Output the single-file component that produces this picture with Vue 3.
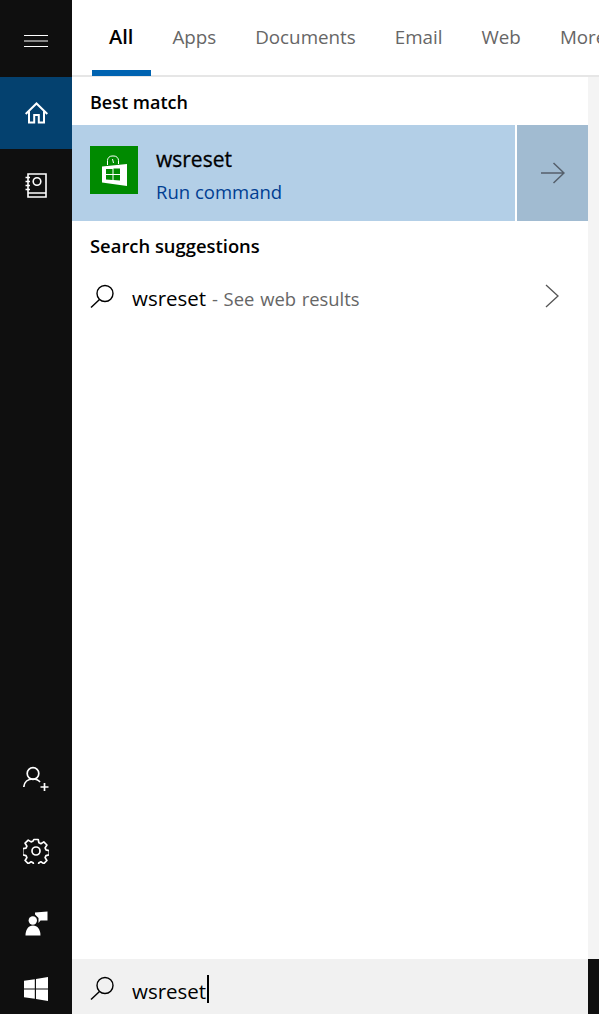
<script setup>
const tabs = ['All', 'Apps', 'Documents', 'Email', 'Web', 'More']
</script>

<template>
  <div class="cortana">
    <aside class="rail">
      <div class="rail-item menu">
        <svg width="24" height="12" viewBox="0 0 24 12"><path d="M0 .5h24M0 6h24M0 11.500h24" stroke="#fff" fill="none" /></svg>
      </div>
      <div class="rail-item active">
        <svg width="23" height="22" viewBox="0 0 23 22" fill="none" stroke="#fff" stroke-width="2"><path d="M.7 12 11.500 1.500 22.300 12M4 9.500V20.500h5.200v-7.500h4.600v7.500H19V9.500" /></svg>
      </div>
      <div class="rail-item">
        <svg width="22" height="25" viewBox="0 0 22 25" fill="none" stroke="#fff" stroke-width="1.600"><path d="M3 1h18v23H3zM3 20h18" /><circle cx="12" cy="8.500" r="3.800" /><path d="M.5 4.500h4.500M.5 8.500h4.500M.5 12.500h4.500M.5 16.500h4.500" /></svg>
      </div>
      <div class="spacer"></div>
      <div class="rail-item">
        <svg width="26" height="26" viewBox="0 0 26 26" fill="none" stroke="#fff" stroke-width="1.700"><circle cx="10" cy="7.500" r="5.800" /><path d="M.8 21c.4-5 4-8 9.200-8 3 0 5.500 1 7 3M17.500 21h8M21.500 17v8" /></svg>
      </div>
      <div class="rail-item">
        <svg width="26" height="26" viewBox="0 0 26 26" fill="none" stroke="#fff" stroke-width="1.700" stroke-linejoin="round"><circle cx="13" cy="13" r="4" /><path d="M10.800 1.500h4.400l.7 3.300 2 .9 2.900-1.800 3.100 3.100-1.800 2.900.9 2 3.300.7v4.200l-3.300.8-.9 2 1.800 2.900-3.100 3.100-2.900-1.800-2 .9-.7 3.300h-4.400l-.7-3.300-2-.9-2.900 1.800-3.100-3.100 1.800-2.900-.9-2-3.300-.8V10.800l3.300-.7.900-2-1.800-2.900 3.100-3.100 2.900 1.800 2-.9z" /></svg>
      </div>
      <div class="rail-item">
        <svg width="23" height="25" viewBox="0 0 23 25" fill="#fff"><circle cx="7.800" cy="9.500" r="4.200" /><path d="M.5 24.500c0-6 3-10 7.500-10s7.500 4 7.500 10z" /><path d="M10 1.500 22.500 .5v9h-7l-2 2.500V7l-3.500-3.500z" /></svg>
      </div>
      <div class="rail-item start">
        <svg width="24" height="24" viewBox="0 0 24 24" fill="#fff"><path d="M0 3.800 10.800 2.200v9.200H0zM12 2 24 0v11.400H12zM0 12.600h10.800v9.200L0 20.200zM12 12.600h12V24l-12-2z" /></svg>
      </div>
    </aside>

    <div class="main">
      <nav class="tabs">
        <span v-for="(t, i) in tabs" :key="t" class="tab" :class="{ on: i === 0 }">{{ t }}</span>
      </nav>

      <div class="middle">
        <section class="results">
          <h2 class="heading">Best match</h2>
          <div class="match">
            <div class="match-body">
              <div class="tile">
                <svg width="25" height="31" viewBox="0 0 25 31">
                  <path d="M5.500 10V5.500a4.500 4.500 0 0 1 4.500-4.500h2a4.500 4.500 0 0 1 4.500 4.500V9M10.500 4l1 4" fill="none" stroke="#fff" />
                  <path d="M0 11.500 25 9v22L0 27.500z" fill="#fff" />
                  <path d="M4 14h6.500v5H4zM11.500 13.500H18V19h-6.500zM4 20h6.500v5L4 24.500zM11.500 20H18v5.500l-6.500-.5z" fill="#008a00" />
                </svg>
              </div>
              <div>
                <div class="match-title">wsreset</div>
                <div class="match-sub">Run command</div>
              </div>
            </div>
            <div class="match-arrow">
              <svg width="24" height="22" viewBox="0 0 24 22" fill="none" stroke="#555f6b" stroke-width="1.500"><path d="M0 11h23M12.500 1l10.500 10-10.500 10" /></svg>
            </div>
          </div>

          <h2 class="heading wide">Search suggestions</h2>
          <div class="suggestion">
            <svg class="glass" width="25" height="25" viewBox="0 0 25 25" fill="none" stroke="#000" stroke-width="1.400"><circle cx="15" cy="9.500" r="8" /><path d="M9.500 15.500 1 23.500" /></svg>
            <span class="query">wsreset</span>
            <span class="hint">&nbsp;- See web results</span>
            <svg class="chevron" width="14" height="24" viewBox="0 0 14 24" fill="none" stroke="#555" stroke-width="1.300"><path d="M1 1l12 11L1 23" /></svg>
          </div>
        </section>
        <div class="scroll"></div>
      </div>

      <div class="footer">
        <div class="searchbox">
          <svg class="glass" width="25" height="25" viewBox="0 0 25 25" fill="none" stroke="#000" stroke-width="1.400"><circle cx="15" cy="9.500" r="8" /><path d="M9.500 15.500 1 23.500" /></svg>
          <span class="query">wsreset</span><span class="caret"></span>
        </div>
        <div class="corner"></div>
      </div>
    </div>
  </div>
</template>

<style>
html, body {
  margin: 0;
  background: #fff;
}
</style>

<style scoped>
.cortana {
  display: flex;
  width: 599px;
  height: 1014px;
  overflow: hidden;
  font-family: "Open Sans", "Noto Sans", sans-serif;
  color: #000;
}

.rail {
  flex: 0 0 72px;
  display: flex;
  flex-direction: column;
  background: #0f0f0f;
}
.rail-item {
  height: 72px;
  display: flex;
  align-items: center;
  justify-content: center;
}
.rail-item.menu {
  height: 77px;
  padding-top: 4px;
  box-sizing: border-box;
}
.rail-item.active {
  background: #04416f;
}
.rail-item.start {
  height: 55px;
  padding-top: 5px;
  box-sizing: border-box;
}
.spacer {
  flex: 1;
}

.main {
  flex: 1;
  display: flex;
  flex-direction: column;
  min-width: 0;
}

.tabs {
  flex: 0 0 77px;
  min-height: 0;
  box-sizing: border-box;
  display: flex;
  align-items: flex-start;
  gap: 39px;
  padding-left: 20px;
  border-bottom: 2px solid #e6e6e6;
  white-space: nowrap;
}
.tab {
  padding-top: 23px;
  font-size: 18.800px;
  line-height: 28px;
  color: #666;
}
.tab.on {
  box-sizing: border-box;
  height: 76px;
  padding: 23px 18px 0 17px;
  margin-right: -18px;
  color: #000;
  font-size: 20px;
  font-weight: 600;
  border-bottom: 6px solid #0063b1;
}

.middle {
  flex: 1;
  display: flex;
  min-height: 0;
}
.results {
  flex: 1;
  min-width: 0;
}
.scroll {
  flex: 0 0 11px;
  background: #f4f4f4;
}

.heading {
  margin: 0;
  padding: 13px 0 11px 18px;
  font-size: 18px;
  font-weight: 600;
  line-height: 24px;
}
.heading.wide {
  font-size: 18.400px;
}

.match {
  display: flex;
  height: 96px;
  gap: 2px;
}
.match-body {
  flex: 1;
  display: flex;
  align-items: flex-start;
  gap: 18px;
  padding: 19px 0 0 18px;
  background: #b3cfe7;
}
.tile {
  width: 48px;
  height: 48px;
  margin-top: 2px;
  background: #008a00;
  display: flex;
  align-items: center;
  justify-content: center;
}
.match-title {
  font-size: 21px;
  line-height: 30px;
  font-weight: 500;
  -webkit-text-stroke: 0.3px #000;
}
.match-sub {
  margin-top: 5px;
  font-size: 18.500px;
  line-height: 26px;
  color: #003e92;
}
.match-arrow {
  flex: 0 0 71px;
  display: flex;
  align-items: center;
  justify-content: center;
  background: #a1bbd1;
}

.suggestion {
  display: flex;
  align-items: center;
  height: 50px;
  padding-left: 18px;
  margin-top: 2px;
}
.glass {
  margin-right: 17px;
  flex: none;
}
.query {
  position: relative;
  top: 2px;
  font-size: 20.500px;
}
.hint {
  position: relative;
  top: 2px;
  font-size: 18.400px;
  word-spacing: 1px;
  color: #666;
}
.chevron {
  margin-left: auto;
  margin-right: 29px;
}

.footer {
  flex: 0 0 55px;
  display: flex;
}
.searchbox {
  flex: 1;
  display: flex;
  align-items: center;
  padding: 4px 0 0 18px;
  background: #f1f1f1;
}
.caret {
  width: 2px;
  height: 28px;
  margin-left: 1px;
  background: #000;
}
.corner {
  flex: 0 0 11px;
  background: #0f0f0f;
}
</style>
